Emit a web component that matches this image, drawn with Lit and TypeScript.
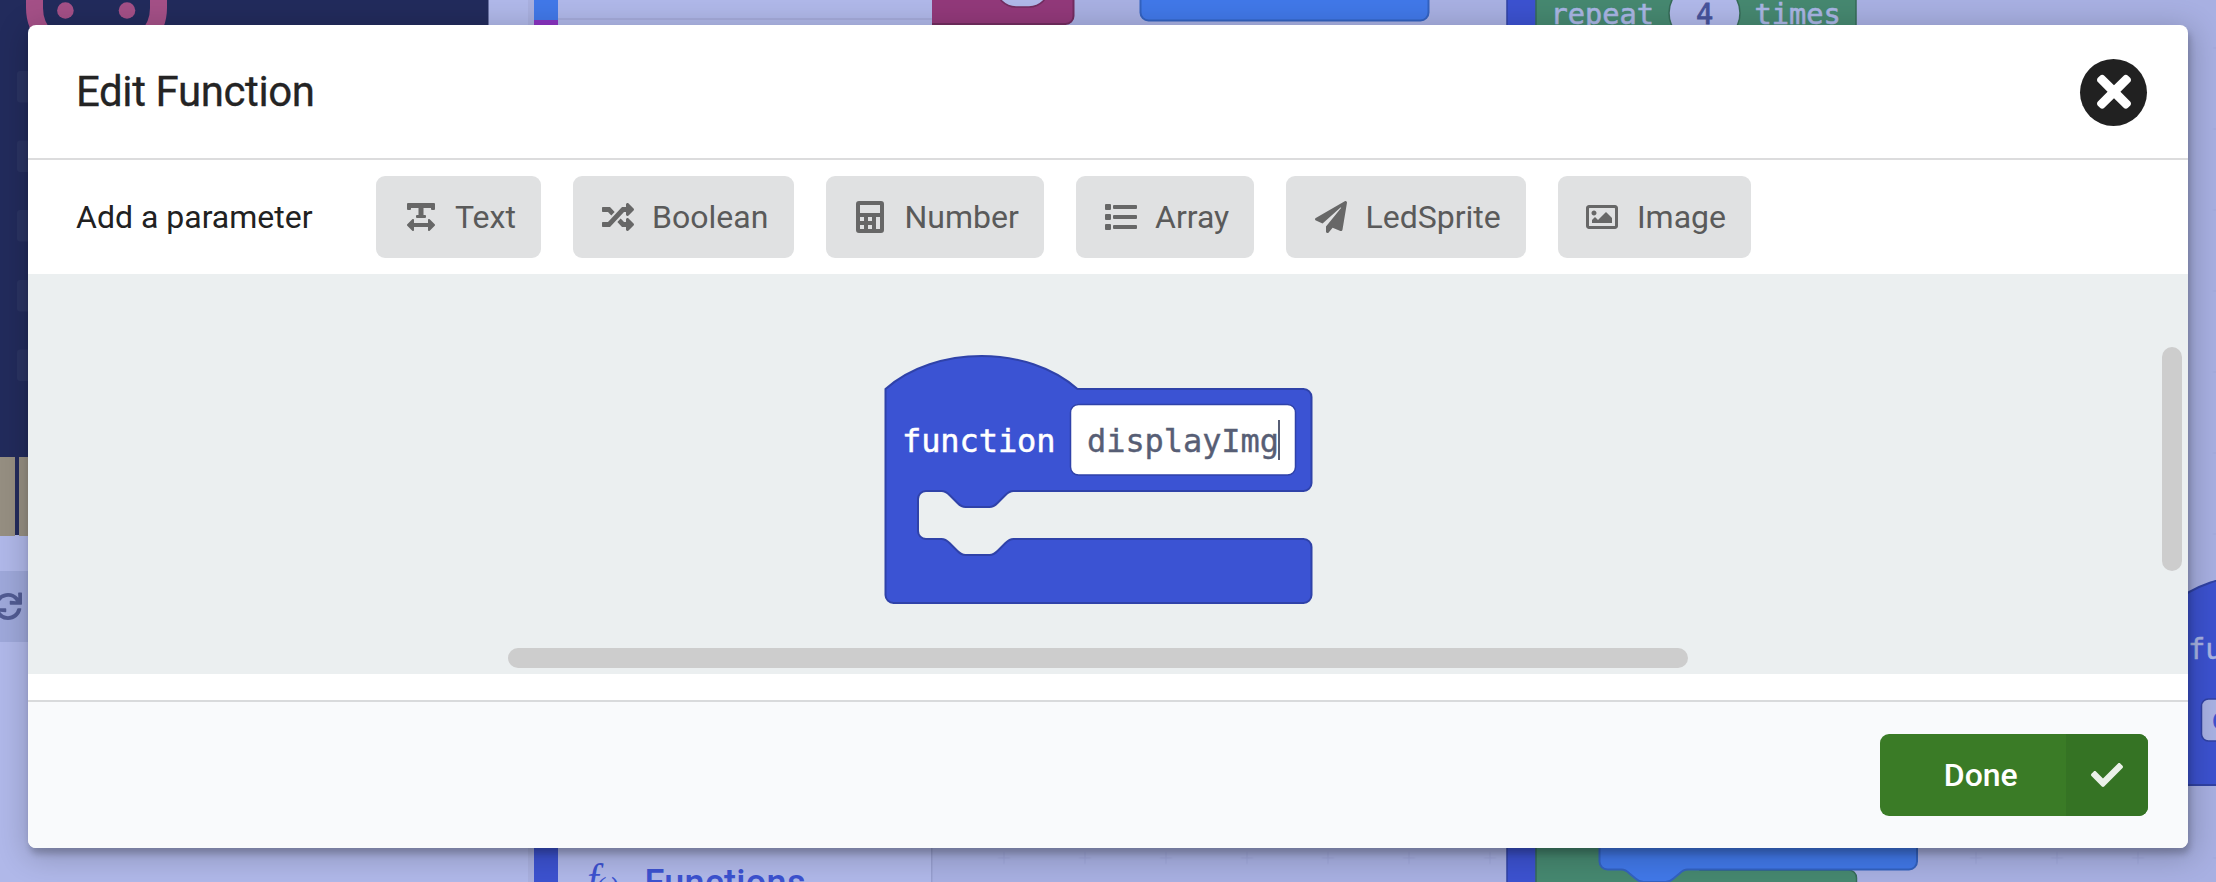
import { LitElement, html, css, svg } from "lit";
import { customElement, property } from "lit/decorators.js";

const ICONS: Record<string, { w: number; h: number; box: string; d: string }> = {
  text: {
    w: 28, h: 32, box: "0 0 448 512",
    d: "M432 32H16A16 16 0 0 0 0 48v80a16 16 0 0 0 16 16h32a16 16 0 0 0 16-16v-16h120v112h-24a16 16 0 0 0-16 16v16a16 16 0 0 0 16 16h128a16 16 0 0 0 16-16v-16a16 16 0 0 0-16-16h-24V112h120v16a16 16 0 0 0 16 16h32a16 16 0 0 0 16-16V48a16 16 0 0 0-16-16zm-68.69 260.69C354 283.36 336 288.36 336 304v48H112v-48c0-14.31-17.31-21.32-27.31-11.31l-80 80a16 16 0 0 0 0 22.62l80 80C94 484.64 112 479.64 112 464v-48h224v48c0 14.31 17.31 21.32 27.31 11.31l80-80a16 16 0 0 0 0-22.62z",
  },
  random: {
    w: 32, h: 32, box: "0 0 512 512",
    d: "M504.971 359.029c9.373 9.373 9.373 24.569 0 33.941l-80 79.984c-15.01 15.01-40.971 4.49-40.971-16.971V416h-58.785a12.004 12.004 0 0 1-8.773-3.812l-70.556-75.596 53.333-57.143L352 336h32v-39.981c0-21.438 25.943-31.998 40.971-16.971l80 79.981zM12 176h84l52.781 56.551 53.333-57.143-70.556-75.596A11.999 11.999 0 0 0 122.785 96H12c-6.627 0-12 5.373-12 12v56c0 6.627 5.373 12 12 12zm372 0v39.984c0 21.46 25.961 31.98 40.971 16.971l80-79.984c9.373-9.373 9.373-24.569 0-33.941l-80-79.981C409.943 24.021 384 34.582 384 56.019V96h-58.785a12.004 12.004 0 0 0-8.773 3.812L96 336H12c-6.627 0-12 5.373-12 12v56c0 6.627 5.373 12 12 12h110.785c3.326 0 6.503-1.381 8.773-3.812L352 176h32z",
  },
  calculator: {
    w: 28, h: 32, box: "0 0 28 32",
    d: "M3 0H25a3 3 0 0 1 3 3V29a3 3 0 0 1-3 3H3a3 3 0 0 1-3-3V3a3 3 0 0 1 3-3zM4 4V12H24V4zM4 16V20H8V16zM12 16V20H16V16zM20 16V28H24V16zM4 24V28H8V24zM12 24V28H16V24z",
  },
  list: {
    w: 32, h: 32, box: "0 0 32 32",
    d: "M1 3H5a1 1 0 0 1 1 1V8a1 1 0 0 1-1 1H1a1 1 0 0 1-1-1V4a1 1 0 0 1 1-1zM9 4H31a1 1 0 0 1 1 1V7a1 1 0 0 1-1 1H9a1 1 0 0 1-1-1V5a1 1 0 0 1 1-1zM1 13H5a1 1 0 0 1 1 1V18a1 1 0 0 1-1 1H1a1 1 0 0 1-1-1V14a1 1 0 0 1 1-1zM9 14H31a1 1 0 0 1 1 1V17a1 1 0 0 1-1 1H9a1 1 0 0 1-1-1V15a1 1 0 0 1 1-1zM1 23H5a1 1 0 0 1 1 1V28a1 1 0 0 1-1 1H1a1 1 0 0 1-1-1V24a1 1 0 0 1 1-1zM9 24H31a1 1 0 0 1 1 1V27a1 1 0 0 1-1 1H9a1 1 0 0 1-1-1V25a1 1 0 0 1 1-1z",
  },
  plane: {
    w: 32, h: 32, box: "0 0 512 512",
    d: "M476 3.2L12.5 270.6c-18.1 10.4-15.8 35.6 2.2 43.2L121 358.4l287.3-253.2c5.5-4.9 13.3 2.6 8.6 8.3L176 407v80.5c0 23.6 28.5 32.9 42.5 15.8L282 426l124.6 52.2c14.2 6 30.4-2.9 33-18.2l72-432C515 7.8 493.3-6.8 476 3.2z",
  },
  image: {
    w: 32, h: 32, box: "0 0 512 512",
    d: "M464 64H48C21.49 64 0 85.49 0 112v288c0 26.51 21.49 48 48 48h416c26.51 0 48-21.49 48-48V112c0-26.51-21.49-48-48-48zm-6 336H54a6 6 0 0 1-6-6V118a6 6 0 0 1 6-6h404a6 6 0 0 1 6 6v276a6 6 0 0 1-6 6zM128 152c-22.091 0-40 17.909-40 40s17.909 40 40 40 40-17.909 40-40-17.909-40-40-40zM96 352h320v-80l-87.515-87.515c-4.686-4.686-12.284-4.686-16.971 0L192 304l-39.515-39.515c-4.686-4.686-12.284-4.686-16.971 0L96 304v48z",
  },
  close: {
    w: 34, h: 49.5, box: "0 0 352 512",
    d: "M242.72 256l100.07-100.07c12.28-12.28 12.28-32.19 0-44.48l-22.24-22.24c-12.28-12.28-32.19-12.28-44.48 0L176 189.28 75.93 89.21c-12.28-12.28-32.19-12.28-44.48 0L9.21 111.45c-12.28 12.28-12.28 32.19 0 44.48L109.28 256 9.21 356.07c-12.28 12.28-12.28 32.19 0 44.48l22.24 22.24c12.28 12.28 32.2 12.28 44.48 0L176 322.72l100.07 100.07c12.28 12.28 32.2 12.28 44.48 0l22.24-22.24c12.28-12.28 12.28-32.19 0-44.48L242.72 256z",
  },
  check: {
    w: 32, h: 32, box: "0 0 512 512",
    d: "M173.898 439.404l-166.4-166.4c-9.997-9.997-9.997-26.206 0-36.204l36.203-36.204c9.997-9.998 26.207-9.998 36.204 0L192 312.69 432.095 72.596c9.997-9.997 26.207-9.997 36.204 0l36.203 36.204c9.997 9.997 9.997 26.206 0 36.204l-294.4 294.401c-9.998 9.997-26.207 9.997-36.204-.001z",
  },
};

const SYNC =
  "M440.65 12.57l4 82.77A247.16 247.16 0 0 0 255.83 8C134.73 8 33.91 94.92 12.29 209.82A12 12 0 0 0 24.09 224h49.05a12 12 0 0 0 11.67-9.26 175.91 175.91 0 0 1 317-56.94l-101.46-4.86a12 12 0 0 0-12.57 12v47.41a12 12 0 0 0 12 12H500a12 12 0 0 0 12-12V12a12 12 0 0 0-12-12h-47.37a12 12 0 0 0-11.98 12.57zM255.83 432a175.61 175.61 0 0 1-146-77.8l101.8 4.87a12 12 0 0 0 12.57-12v-47.4a12 12 0 0 0-12-12H12a12 12 0 0 0-12 12V500a12 12 0 0 0 12 12h47.35a12 12 0 0 0 12-12.6l-4.15-82.57A247.17 247.17 0 0 0 255.83 504c121.11 0 221.93-86.92 243.55-201.82a12 12 0 0 0-11.8-14.18h-49.05a12 12 0 0 0-11.67 9.26A175.86 175.86 0 0 1 255.83 432z";

@customElement("fn-icon")
export class FnIcon extends LitElement {
  @property() name = "text";

  static styles = css`
    :host {
      display: inline-flex;
      align-items: center;
      justify-content: center;
    }
    .glyph {
      display: block;
      fill: currentColor;
      fill-rule: evenodd;
    }
  `;

  render() {
    const i = ICONS[this.name];
    return html`<svg class="glyph" width=${i.w} height=${i.h} viewBox=${i.box}>
      <path d=${i.d}></path>
    </svg>`;
  }
}

/* The dimmed block editor that lies behind the dialog. */
@customElement("editor-backdrop")
export class EditorBackdrop extends LitElement {
  static styles = css`
    :host {
      display: block;
    }
    .scene {
      display: block;
    }
    .mono {
      font: 28.7px "DejaVu Sans Mono", monospace;
    }
    .category {
      font: 500 36px Roboto, sans-serif;
    }
    .fx {
      font: italic 42px "Liberation Serif", serif;
    }
    .fx-small {
      font: italic 28px "Liberation Serif", serif;
    }
  `;

  render() {
    const leds = [71, 140.5, 210, 280, 349.5];
    return html`<svg class="scene" width="2216" height="882" viewBox="0 0 2216 882">
      <defs>
        <pattern id="grid" x="-8.5" y="7.5" width="81" height="81" patternUnits="userSpaceOnUse">
          <path d="M34.5 40.5h12M40.5 34.5v12" stroke="#9fa7da" stroke-width="1.2"></path>
        </pattern>
      </defs>
      <rect width="2216" height="882" fill="#b0b8e9"></rect>
      <rect x="932" width="1284" height="882" fill="#a8b0e2"></rect>
      <rect x="932" width="1284" height="882" fill="url(#grid)"></rect>

      <rect width="488.5" height="457" fill="#222b5c"></rect>
      <rect x="34.5" y="-100" width="124" height="151" rx="43" fill="none" stroke="#a45087" stroke-width="17"></rect>
      <circle cx="65.4" cy="10.5" r="8.3" fill="#a45087"></circle>
      <circle cx="127" cy="10.5" r="8.3" fill="#a45087"></circle>
      ${leds.map((y) => svg`<rect x="17" y=${y} width="30" height="31.5" rx="3" fill="#2a3362"></rect>`)}
      <rect y="457" width="40" height="78" fill="#222b5c"></rect>
      <rect y="457" width="15" height="79" fill="#968f82"></rect>
      <rect x="19" y="457" width="20" height="79" fill="#968f82"></rect>
      <rect y="571" width="60" height="71" fill="#9ea8da"></rect>
      <path d=${SYNC} fill="#515b93" transform="translate(-6 592.5) scale(.0547)"></path>

      <rect x="528" width="6" height="882" fill="#a9b0df"></rect>
      <rect x="534" width="24" height="20" fill="#4178e8"></rect>
      <rect x="534" y="20" width="24" height="30" fill="#8a33c2"></rect>
      <rect x="558" y="18" width="374" height="2" fill="#a6acdb"></rect>

      <path d="M932 0H1074V16a8 8 0 0 1-8 8H932z" fill="#92397a"></path>
      <path d="M1073.500 0V16a8 8 0 0 1-8 8H932" fill="none" stroke="#722d60" stroke-width="2"></path>
      <rect x="996" y="-40" width="53" height="47" rx="20" fill="#b0b8e9" stroke="#722d60" stroke-width="1.500"></rect>
      <rect x="1140.500" y="-40" width="288" height="60.500" rx="8" fill="#4178e8" stroke="#3362c0" stroke-width="2"></rect>

      <rect x="1507" y="-10" width="60" height="900" fill="#3c52d0" stroke="#3042a4" stroke-width="1.500"></rect>
      <rect x="1536" y="-10" width="320" height="60" fill="#468870" stroke="#366b58" stroke-width="1.500"></rect>
      <rect x="1669" y="-16" width="71" height="58" rx="29" fill="#b0b8e9" stroke="#366b58" stroke-width="1.500"></rect>
      <g class="mono" fill="#a9b5e4" stroke="#a9b5e4" stroke-width=".6">
        <text x="1550.500" y="23.500">repeat</text>
        <text x="1754.500" y="23.500">times</text>
      </g>
      <text class="mono" x="1696" y="23.500" fill="#47539c" stroke="#47539c" stroke-width=".8">4</text>

      <path d="M1536 840V890H1856.500V878a8 8 0 0 0-8-8H1700V840z" fill="#468870" stroke="#366b58" stroke-width="1.500"></path>
      <path
        d="M1599.500 830V861.500a8 8 0 0 0 8 8h14c4 0 6 2 8 4l6 5c2 2 4 3.500 8 3.500h22c4 0 6-1.500 8-3.500l6-5c2-2 4-4 8-4H1909a8 8 0 0 0 8-8V830z"
        fill="#4178e8" stroke="#3362c0" stroke-width="2"></path>

      <rect x="534" y="780" width="24" height="102" fill="#3c52d0"></rect>
      <rect x="931" y="780" width="1.500" height="102" fill="#979fd0"></rect>
      <g fill="#3c52d0">
        <text class="fx" x="587" y="893">f</text>
        <text class="fx-small" x="595" y="896">(</text>
        <text class="fx-small" x="609" y="896">)</text>
        <text class="category" x="644.500" y="894.500" textLength="161">Functions</text>
      </g>

      <path d="M2171 605c45-40 127-40 172 0V785H2171z" fill="#3c52d0" stroke="#3042a4" stroke-width="2"></path>
      <rect x="2201.500" y="699" width="60" height="42" rx="7" fill="#a9b2e4" stroke="#3042a4" stroke-width="1.500"></rect>
      <text class="mono" x="2188" y="659" fill="#a9b5e4" stroke="#a9b5e4" stroke-width=".5">fu</text>
      <text class="mono" x="2212" y="729" fill="#3c52d0" stroke="#3c52d0" stroke-width=".8">d</text>
    </svg>`;
  }
}

/* Scrollable workspace holding the function definition block. */
@customElement("function-workspace")
export class FunctionWorkspace extends LitElement {
  @property() name = "displayImg";

  static styles = css`
    :host {
      display: block;
      background: #ebeff0;
    }
    .canvas {
      display: block;
    }
    .label {
      font: 32px "DejaVu Sans Mono", monospace;
    }
  `;

  render() {
    return html`<svg class="canvas" width="2160" height="400" viewBox="28 274 2160 400">
      <path
        d="M885.500 389c50-44 142-44 192 0H1303.500a8 8 0 0 1 8 8V483a8 8 0 0 1-8 8H1013.500c-4 0-6 2-8 4l-8 8c-2 2-4 4-8 4h-24c-4 0-6-2-8-4l-8-8c-2-2-4-4-8-4H926a8 8 0 0 0-8 8V531a8 8 0 0 0 8 8h15.500c4 0 6 2 8 4l8 8c2 2 4 4 8 4h24c4 0 6-2 8-4l8-8c2-2 4-4 8-4H1303.500a8 8 0 0 1 8 8V595a8 8 0 0 1-8 8H893.500a8 8 0 0 1-8-8z"
        fill="#3b53d3" stroke="#2f42a9" stroke-width="2"></path>
      <rect x="1070.500" y="404.500" width="225" height="70.500" rx="8" fill="#fff" stroke="#2f42a9" stroke-width="1.500"></rect>
      <text class="label" x="902" y="452" fill="#fff" stroke="#fff" stroke-width=".5"
        textLength="153.500">function</text>
      <text class="label" x="1087" y="452" fill="#575e75" stroke="#575e75" stroke-width=".4"
        textLength="192">${this.name}</text>
      <rect x="1278" y="420" width="2" height="40" fill="#575e75"></rect>
      <rect x="508" y="648" width="1180" height="20" rx="10" fill="#cdcdcd"></rect>
      <rect x="2162" y="347" width="20" height="224" rx="10" fill="#cdcdcd"></rect>
    </svg>`;
  }
}

@customElement("app-root")
export class AppRoot extends LitElement {
  static styles = css`
    :host {
      display: block;
      width: 2216px;
      height: 882px;
      overflow: hidden;
      font-family: Roboto, sans-serif;
    }
    .page {
      display: grid;
      width: 2216px;
      height: 882px;
      overflow: hidden;
    }
    .backdrop,
    .overlay {
      grid-area: 1 / 1;
    }
    .overlay {
      z-index: 1;
      padding: 25px 28px 34px;
      box-sizing: border-box;
      display: flex;
    }
    .modal {
      flex: 1;
      display: flex;
      flex-direction: column;
      background: #fff;
      border-radius: 8px;
      box-shadow: 2px 6px 6px 0 rgba(0, 0, 0, 0.2), 2px 6px 30px 4px rgba(0, 0, 0, 0.2);
    }
    .header {
      height: 133px;
      padding: 0 41px 0 48px;
      border-bottom: 2px solid #dcdcdd;
      display: flex;
      align-items: center;
      justify-content: space-between;
    }
    .title {
      margin: 0;
      font-size: 42px;
      font-weight: 400;
      line-height: 50px;
      letter-spacing: -0.4px;
      color: #242424;
      -webkit-text-stroke: 0.3px #242424;
    }
    .close {
      width: 67px;
      height: 67px;
      margin-top: 1px;
      border: 0;
      padding: 0;
      border-radius: 50%;
      background: #212121;
      color: #fff;
      display: flex;
      align-items: center;
      justify-content: center;
    }
    .params {
      height: 114px;
      padding-left: 48px;
      display: flex;
      align-items: center;
      gap: 32px;
    }
    .params-label {
      width: 268px;
      font-size: 32px;
      color: #212121;
    }
    .param {
      height: 82px;
      box-sizing: border-box;
      border: 0;
      border-radius: 9px;
      padding: 0 25.2px 0 25.5px;
      background: #e0e1e2;
      color: #5a5a5a;
      font: 400 32px Roboto, sans-serif;
      display: flex;
      align-items: center;
    }
    .param-icon {
      width: 38px;
      margin-right: 15.5px;
      opacity: 0.9;
    }
    .footer {
      margin-top: 26px;
      flex: 1;
      border-top: 2px solid #d9dadc;
      border-radius: 0 0 8px 8px;
      background: #f9fafc;
      padding: 0 40px;
      display: flex;
      align-items: center;
      justify-content: flex-end;
    }
    .done {
      width: 268px;
      height: 82px;
      border: 0;
      padding: 0;
      border-radius: 9px;
      overflow: hidden;
      background: #3a7b26;
      color: #fff;
      font: 500 32px Roboto, sans-serif;
      display: flex;
    }
    .done-text {
      flex: 1;
      padding-left: 15.5px;
      display: flex;
      align-items: center;
      justify-content: center;
    }
    .done-icon {
      width: 82px;
      box-sizing: border-box;
      background: #357324;
      color: #ebf1e9;
    }
  `;

  private params = [
    ["text", "Text"],
    ["random", "Boolean"],
    ["calculator", "Number"],
    ["list", "Array"],
    ["plane", "LedSprite"],
    ["image", "Image"],
  ];

  render() {
    return html`<div class="page">
      <editor-backdrop class="backdrop"></editor-backdrop>
      <div class="overlay">
        <section class="modal">
          <header class="header">
            <h1 class="title">Edit Function</h1>
            <button class="close" aria-label="Close"><fn-icon name="close"></fn-icon></button>
          </header>
          <div class="params">
            <span class="params-label">Add a parameter</span>
            ${this.params.map(
              ([icon, label]) => html`<button class="param">
                <fn-icon class="param-icon" name=${icon}></fn-icon><span>${label}</span>
              </button>`
            )}
          </div>
          <function-workspace></function-workspace>
          <footer class="footer">
            <button class="done">
              <span class="done-text">Done</span>
              <fn-icon class="done-icon" name="check"></fn-icon>
            </button>
          </footer>
        </section>
      </div>
    </div>`;
  }
}
